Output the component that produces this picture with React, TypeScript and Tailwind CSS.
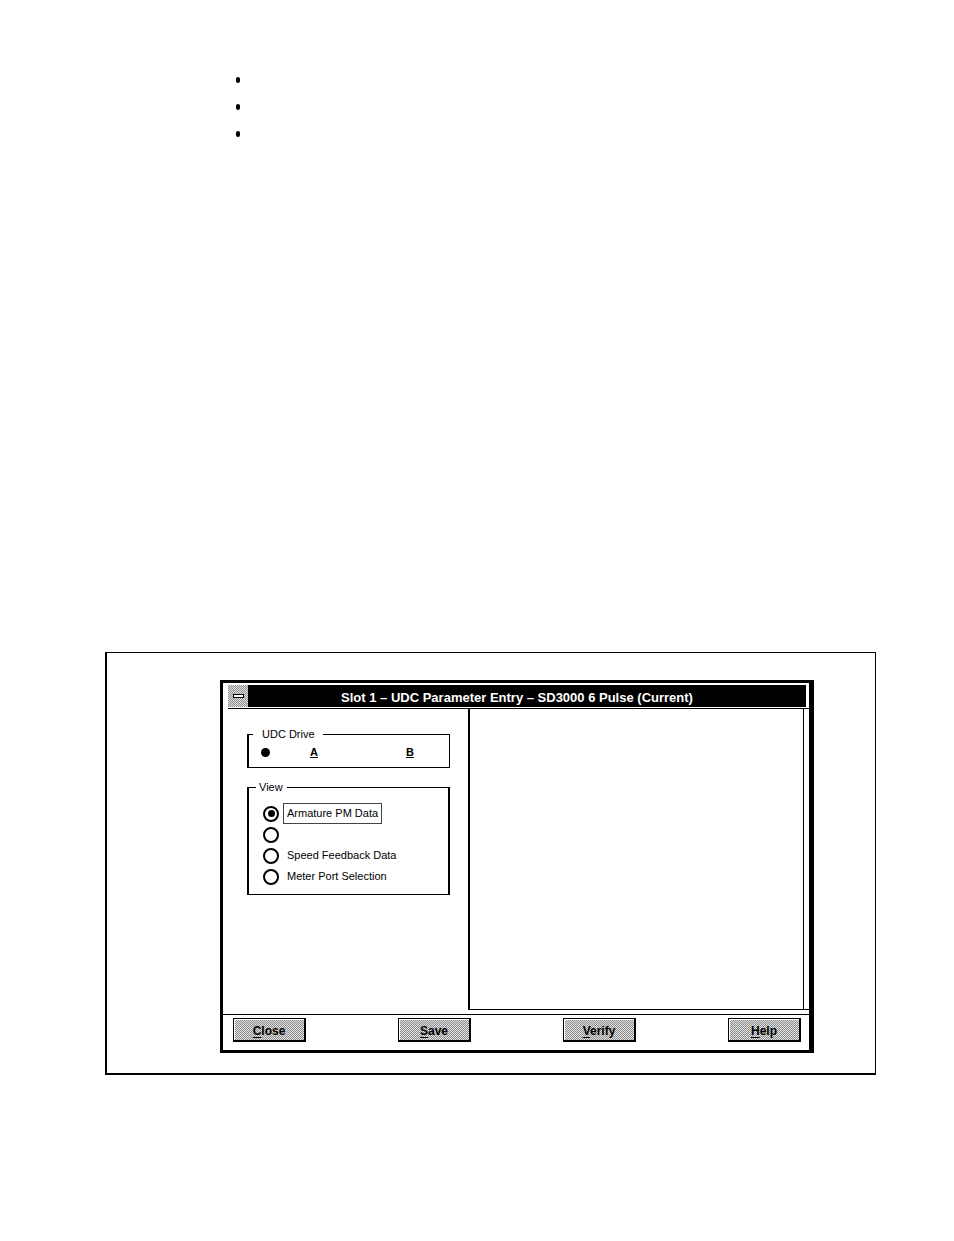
import React from "react"

const dither =
  "bg-[repeating-conic-gradient(#8c8c8c_0%_25%,#e2e2e2_0%_50%)] bg-[length:2px_2px]"

function DlgButton({ label }: { label: string }) {
  return (
    <button
      className={`h-[24px] w-[73px] border-t border-l border-r-2 border-b-2 border-black shadow-[inset_1px_1px_0_#fff] ${dither} pt-[2px] text-[12px] font-bold leading-none text-black`}
    >
      <span className="underline underline-offset-2">{label[0]}</span>
      {label.slice(1)}
    </button>
  )
}

function Radio({ checked }: { checked?: boolean }) {
  return (
    <span className="flex h-[16px] w-[16px] shrink-0 items-center justify-center rounded-full border-2 border-black bg-white">
      {checked && <span className="h-[7px] w-[7px] rounded-full bg-black" />}
    </span>
  )
}

const views = [
  { label: "Armature PM Data", checked: true, focus: true },
  { label: "", checked: false, focus: false },
  { label: "Speed Feedback Data", checked: false, focus: false },
  { label: "Meter Port Selection", checked: false, focus: false },
]

export default function App() {
  return (
    <div className="min-h-[1241px] w-full bg-white font-['Liberation_Sans',Arial,sans-serif] text-black">
      {/* bullet list */}
      <ul className="pl-[236px] pt-[66px]">
        {[0, 1, 2].map((i) => (
          <li key={i} className="flex h-[27px] items-center">
            <span className="h-[6px] w-[4px] rounded-full bg-black" />
          </li>
        ))}
      </ul>

      {/* figure frame */}
      <div className="ml-[105px] mt-[505px] h-[423px] w-[771px] border-t border-l-2 border-r border-b-2 border-black pl-[113px] pt-[27px]">
        {/* dialog window */}
        <div className="flex h-[373px] w-[594px] flex-col border-t-[3px] border-l-[3px] border-b-[3px] border-r-[5px] border-black bg-white">
          <div className="pl-[5px] pt-[2px]">
            {/* title bar */}
            <div className="mr-[3px] flex h-[22px]">
              <div className={`flex w-[20px] items-center justify-center ${dither}`}>
                <span className="h-[4px] w-[11px] border border-black bg-white" />
              </div>
              <div className="flex flex-1 items-center justify-center bg-black pr-[20px] pt-[3px] text-[13px] font-bold text-white">
                Slot 1 – UDC Parameter Entry – SD3000 6 Pulse (Current)
              </div>
            </div>
            <div className="mt-px h-px bg-black" />

            {/* body */}
            <div className="flex h-[301px]">
              <div className="w-[240px] pl-[19px] pt-[19px]">
                <fieldset className="w-[203px] border-l-2 border-r border-b border-t border-black pb-[7px]">
                  <legend className="ml-[4px] pl-[9px] pr-[8px] text-[11px] leading-[13px]">UDC Drive</legend>
                  <div className="mt-[3px] flex h-[16px] items-center pl-[12px] text-[11px] font-bold">
                    <span className="h-[9px] w-[9px] rounded-full bg-black" />
                    <span className="ml-[40px] underline">A</span>
                    <span className="ml-[88px] underline">B</span>
                  </div>
                </fieldset>

                <fieldset className="mt-[13px] w-[203px] border-2 border-t border-b border-black pb-[7px]">
                  <legend className="ml-[7px] pl-[3px] pr-[4px] text-[11px] leading-[13px]">View</legend>
                  <div className="flex flex-col pl-[14px] pt-[9px]">
                    {views.map((v, i) => (
                      <div key={i} className="flex h-[21px] items-center">
                        <Radio checked={v.checked} />
                        <span
                          className={`ml-[4px] flex h-[21px] items-center border px-[3px] text-[11px] ${
                            v.focus ? "border-[#444]" : "border-transparent"
                          }`}
                        >
                          {v.label}
                        </span>
                      </div>
                    ))}
                  </div>
                </fieldset>
              </div>
              <div className="flex flex-1 border-l-2 border-b border-black">
                <div className="mr-[5px] flex-1 border-r border-black" />
              </div>
            </div>
          </div>

          <div className="mt-[4px] h-px bg-black" />

          {/* button row */}
          <div className="flex flex-1 items-start justify-between pl-[10px] pr-[8px] pt-[3px]">
            <DlgButton label="Close" />
            <DlgButton label="Save" />
            <DlgButton label="Verify" />
            <DlgButton label="Help" />
          </div>
        </div>
      </div>
    </div>
  )
}
